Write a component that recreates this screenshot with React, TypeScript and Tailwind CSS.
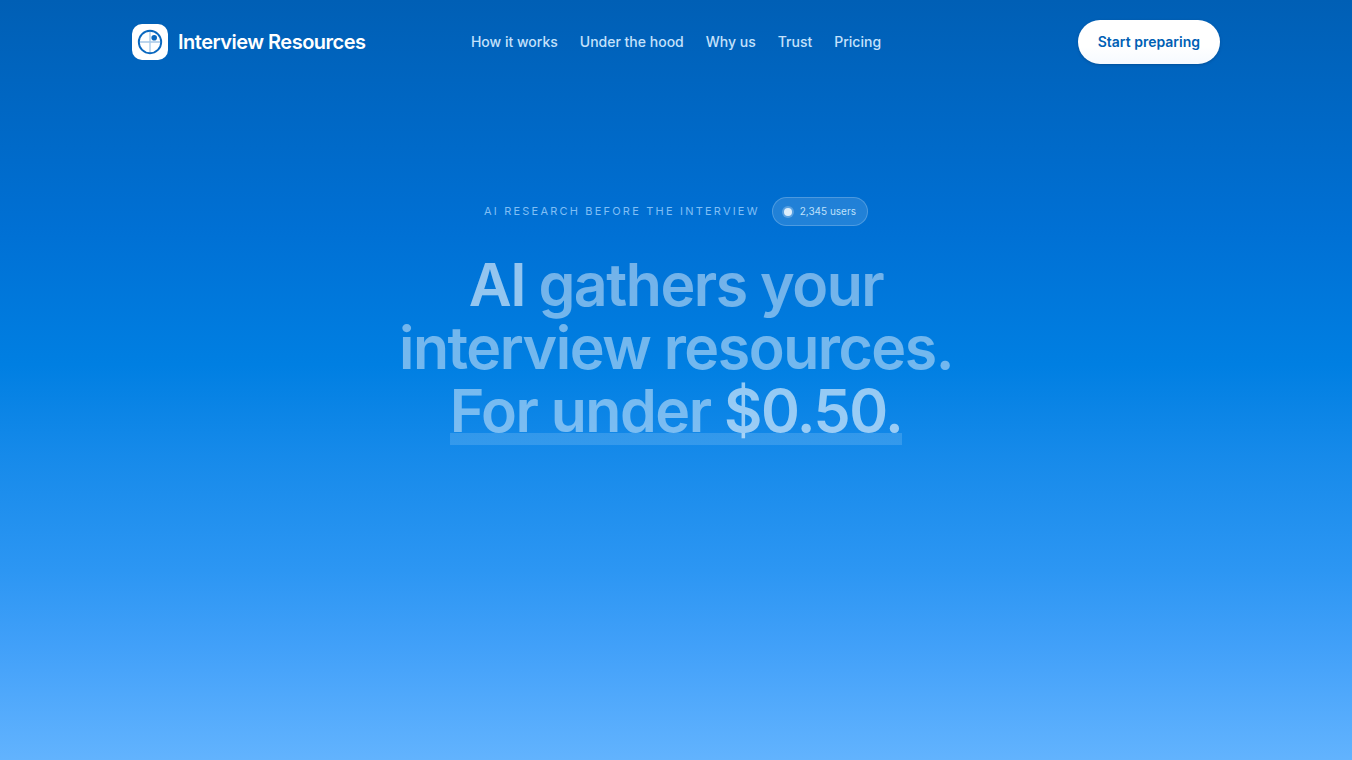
const links = [
  { label: "How it works", href: "#how-it-works" },
  { label: "Under the hood", href: "#under-the-hood" },
  { label: "Why us", href: "#why-us" },
  { label: "Trust", href: "#trust" },
  { label: "Pricing", href: "#pricing" },
];

function LogoMark() {
  return (
    <span className="flex size-9 items-center justify-center rounded-[10px] bg-white">
      <svg viewBox="0 0 36 36" className="size-9" fill="none" aria-hidden="true">
        <path d="M18 7v22M7 18h22" stroke="#0062bb" strokeOpacity="0.35" strokeWidth="1.3" />
        <circle cx="18" cy="18" r="11.2" stroke="#0a68bf" strokeWidth="1.9" />
        <circle cx="22.2" cy="13.8" r="2.8" fill="#0a68bf" />
      </svg>
    </span>
  );
}

function Header() {
  return (
    <header className="mx-auto grid w-full max-w-6xl grid-cols-[1fr_auto_1fr] items-center px-8 py-5">
      <a href="#top" className="flex items-center gap-2.5 justify-self-start whitespace-nowrap text-xl font-semibold tracking-tight text-white">
        <LogoMark />
        Interview Resources
      </a>
      <nav aria-label="Main" className="flex items-center gap-[22px] whitespace-nowrap text-sm font-medium text-[#c4e1fb]">
        {links.map((link) => (
          <a key={link.href} href={link.href}>
            {link.label}
          </a>
        ))}
      </nav>
      <a
        href="#start"
        className="flex h-11 items-center justify-self-end whitespace-nowrap rounded-full bg-white bg-linear-to-b from-white from-60% to-[#f6faff] px-5 text-sm font-semibold text-[#005fb4] shadow-sm shadow-[#00407a]/40"
      >
        Start preparing
      </a>
    </header>
  );
}

function Hero() {
  return (
    <main className="mx-auto flex w-full max-w-6xl flex-col items-center px-8 pt-[113px]">
      <div className="flex items-center gap-3 whitespace-nowrap text-[11px]">
        <p className="uppercase tracking-[0.2em] text-[#80bff5]">AI research before the interview</p>
        <p className="flex h-[29px] items-center gap-2 rounded-full border border-white/20 bg-white/13 px-[11px] text-[10px] text-[#bfe0fb]">
          <span className="size-2 rounded-full bg-[#dcedfb] shadow-[0_0_0_2px_rgba(255,255,255,0.25)]" />
          2,345 users
        </p>
      </div>
      <h1 className="mt-[27px] whitespace-nowrap text-center text-[59px] leading-[63px] font-semibold tracking-tight text-white/45">
        <span className="text-white/58">AI</span> gathers your
        <br />
        interview resources.
        <br />
        <span className="inline-block bg-[linear-gradient(rgba(255,255,255,0.14),rgba(255,255,255,0.14))] bg-size-[100%_12px] bg-position-[0_100%] bg-no-repeat pb-[3px]">
          For under <span className="text-white/58">$0.50.</span>
        </span>
      </h1>
    </main>
  );
}

export default function App() {
  return (
    <div
      id="top"
      className="min-h-screen bg-[linear-gradient(180deg,#005fb5_0%,#0070d4_30%,#007fe2_48%,#168aea_60%,#2c96f3_75%,#41a0f9_85%,#62b3fe_100%)] font-[Inter,'Liberation_Sans',sans-serif]"
    >
      <Header />
      <Hero />
    </div>
  );
}
